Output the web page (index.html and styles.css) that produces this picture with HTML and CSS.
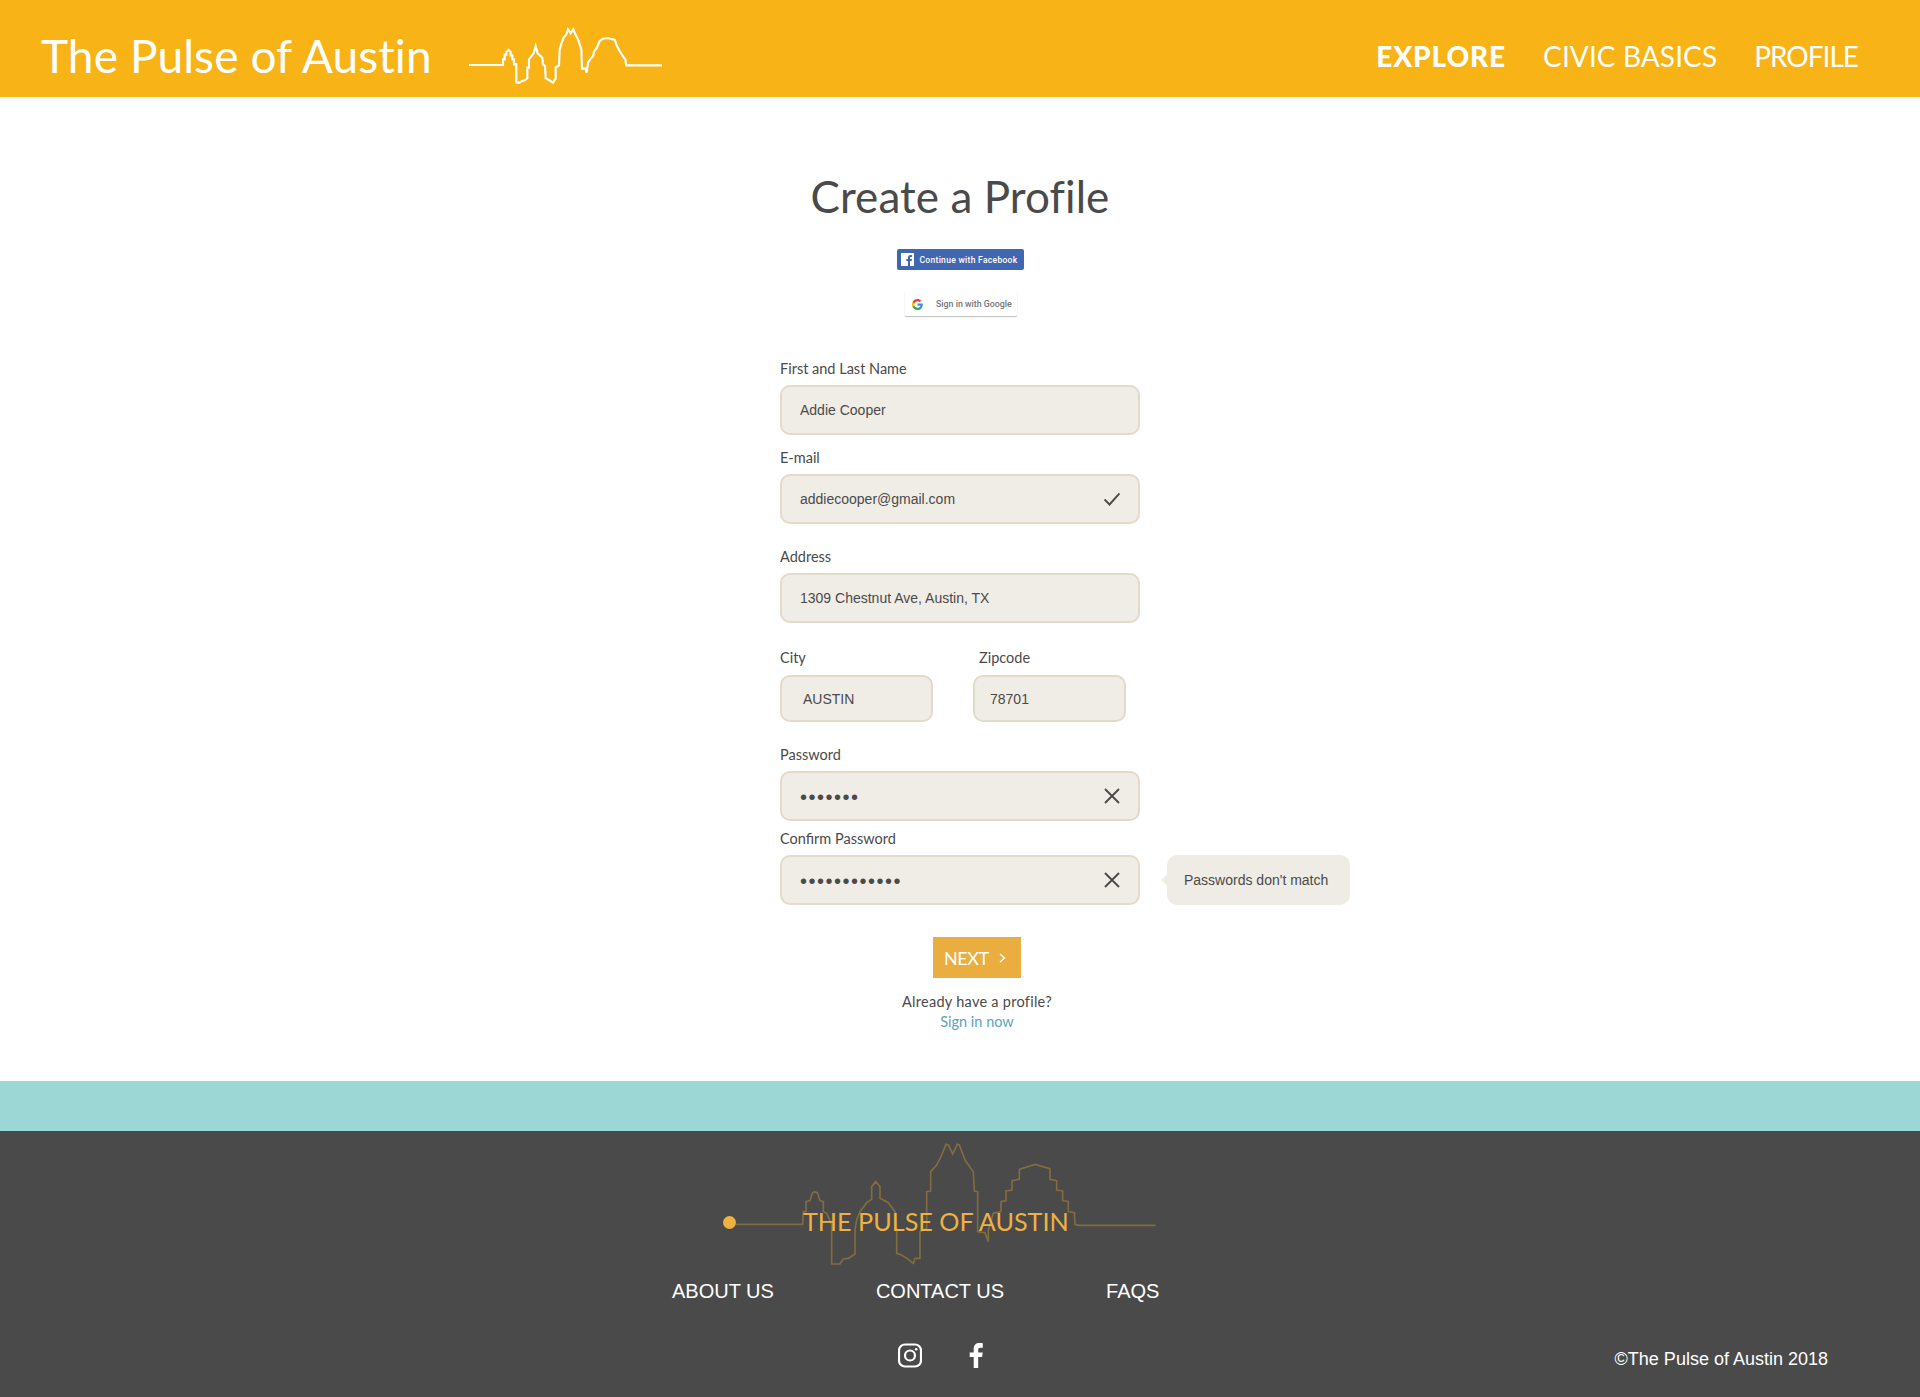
FILE: index.html
```html
<!DOCTYPE html>
<html lang="en">
<head>
<meta charset="utf-8">
<title>The Pulse of Austin</title>
<link rel="stylesheet" href="styles.css">
</head>
<body>
<header class="header">
  <a class="header__title">The Pulse of Austin</a>
  <svg class="header__skyline" viewBox="28 30 580 180" aria-hidden="true">
    <polyline points="28,147 130,147 130,130 135,130 135,116 140,116 140,108 147,102 153,108 153,118 158,118 158,130 163,130 163,145 170,145 170,200 180,200 186,196 195,193 203,187 203,155 208,155 208,130 212,125 222,112 228,90 234,112 240,118 248,125 250,145 256,150 258,187 268,192 280,200 288,188 288,155 298,148 300,100 306,80 312,65 320,55 325,40 333,52 341,40 347,55 355,70 360,85 365,100 367,158 378,158 381,170 385,140 392,130 400,120 404,105 412,95 420,75 430,68 445,66 465,72 472,90 480,105 488,118 497,130 500,148 608,148"/>
  </svg>
  <nav class="nav">
    <a class="nav__link nav__link--active">EXPLORE</a>
    <a class="nav__link">CIVIC BASICS</a>
    <a class="nav__link nav__link--narrow">PROFILE</a>
  </nav>
</header>

<main class="main">
  <h1 class="main__title">Create a Profile</h1>
  <a class="fb-btn">
    <svg class="fb-btn__icon" viewBox="0 0 14 14" aria-hidden="true"><path fill="#fff" d="M0 0h14v14H9.7V8.6h1.8l.3-2.1H9.700V5.200c0-.6.2-1 1-1h1.100V2.300C11.600 2.300 11 2.200 10.200 2.200c-1.600 0-2.700 1-2.700 2.800v1.500H5.700v2.100h1.800V14H0z"/></svg>
    <span>Continue with Facebook</span>
  </a>
  <a class="google-btn">
    <svg class="google-btn__icon" viewBox="0 0 18 18" aria-hidden="true">
      <path fill="#4285F4" d="M17.64 9.2c0-.637-.057-1.251-.164-1.84H9v3.481h4.844c-.209 1.125-.843 2.078-1.796 2.717v2.258h2.908c1.702-1.567 2.684-3.874 2.684-6.615z"/>
      <path fill="#34A853" d="M9 18c2.43 0 4.467-.806 5.956-2.18l-2.908-2.259c-.806.54-1.837.86-3.048.86-2.344 0-4.328-1.584-5.036-3.711H.957v2.332C2.438 15.983 5.482 18 9 18z"/>
      <path fill="#FBBC05" d="M3.964 10.71c-.18-.54-.282-1.117-.282-1.71s.102-1.17.282-1.71V4.958H.957C.347 6.173 0 7.548 0 9s.348 2.827.957 4.042l3.007-2.332z"/>
      <path fill="#EA4335" d="M9 3.58c1.321 0 2.508.454 3.44 1.345l2.582-2.58C13.463.891 11.426 0 9 0 5.482 0 2.438 2.017.957 4.958L3.964 7.29C4.672 5.163 6.656 3.58 9 3.58z"/>
    </svg>
    <span>Sign in with Google</span>
  </a>

  <form class="form">
    <div class="field field--first">
      <label class="field__label">First and Last Name</label>
      <div class="input">Addie Cooper</div>
    </div>
    <div class="field field--email">
      <label class="field__label">E-mail</label>
      <div class="input">addiecooper@gmail.com
        <svg class="input__icon" viewBox="0 0 16 16" aria-hidden="true"><polyline points="0.500,8.500 5.500,13.500 15.500,2.500"/></svg>
      </div>
    </div>
    <div class="field field--address">
      <label class="field__label">Address</label>
      <div class="input">1309 Chestnut Ave, Austin, TX</div>
    </div>
    <div class="field-row">
      <div class="field field--half">
        <label class="field__label">City</label>
        <div class="input input--short input--city">AUSTIN</div>
      </div>
      <div class="field field--half">
        <label class="field__label field__label--zip">Zipcode</label>
        <div class="input input--short input--zip">78701</div>
      </div>
    </div>
    <div class="field field--password">
      <label class="field__label">Password</label>
      <div class="input"><span class="input__dots">•••••••</span>
        <svg class="input__icon" viewBox="0 0 16 16" aria-hidden="true"><path d="M1 1l14 14M15 1L1 15"/></svg>
      </div>
    </div>
    <div class="field field--confirm">
      <label class="field__label">Confirm Password</label>
      <div class="input"><span class="input__dots">••••••••••••</span>
        <svg class="input__icon" viewBox="0 0 16 16" aria-hidden="true"><path d="M1 1l14 14M15 1L1 15"/></svg>
        <div class="tooltip">Passwords don't match</div>
      </div>
    </div>
    <div class="form__actions">
      <a class="next-btn">NEXT
        <svg class="next-btn__chevron" viewBox="0 0 7 10" aria-hidden="true"><polyline points="1,1 5.500,5 1,9"/></svg>
      </a>
      <p class="form__hint">Already have a profile?</p>
      <a class="form__signin">Sign in now</a>
    </div>
  </form>
</main>

<div class="band"></div>

<footer class="footer">
  <div class="footer__brand">
    <svg class="footer__skyline" viewBox="69 30 1300 381" aria-hidden="true">
      <polyline points="108,283 308,283 310,245 318,245 318,215 330,212 337,190 343,185 352,188 360,212 370,215 370,245 380,250 395,283 395,402 420,402 430,387 445,385 465,372 465,300 470,270 480,245 500,218 515,208 515,170 527,155 540,170 540,205 565,218 585,245 590,300 590,370 605,375 625,388 640,400 645,385 660,385 660,305 680,295 680,185 692,183 692,125 710,105 725,75 738,43 745,45 758,72 772,43 778,45 795,90 820,125 823,183 833,185 833,305 855,308 865,335 865,300 880,250 903,245 903,215 918,212 918,183 936,180 936,152 958,148 958,118 1005,103 1050,116 1050,148 1070,152 1070,180 1088,183 1088,212 1105,215 1105,245 1123,248 1125,283 1135,286 1367,286"/>
    </svg>
    <span class="footer__dot"></span>
    <span class="footer__name">THE PULSE OF AUSTIN</span>
  </div>
  <nav class="footer__links">
    <a>ABOUT US</a>
    <a>CONTACT US</a>
    <a>FAQS</a>
  </nav>
  <div class="footer__bottom">
    <svg class="footer__insta" viewBox="0 0 24 24" aria-hidden="true">
      <rect x="1" y="1" width="22" height="22" rx="6"/>
      <circle cx="12" cy="12" r="5"/>
      <circle class="footer__insta-dot" cx="18.200" cy="5.800" r="1.300"/>
    </svg>
    <svg class="footer__fb" viewBox="0 0 14 25" aria-hidden="true"><path d="M9.200 25V14h3.900l.6-4.400H9.200V6.800c0-1.300.4-2.100 2.200-2.100h2.400V.2C13.400.1 12 0 10.400 0 7 0 4.700 2 4.700 5.900v3.700H.7V14h4v11z"/></svg>
    <span class="footer__copy">©The Pulse of Austin 2018</span>
  </div>
</footer>
</body>
</html>
```
FILE: styles.css
```css
* { box-sizing: border-box; }
html, body { margin: 0; padding: 0; }
body {
  background: #fff;
  color: #4a4a4a;
  font-family: "Liberation Sans", Arial, sans-serif;
  width: 1920px;
}

/* Header */
.header {
  height: 97px;
  background: #f8b416;
  color: #fff;
  display: flex;
  align-items: center;
  padding: 14px 62px 0 41px;
  font-family: Lato, sans-serif;
}
.header__title {
  font-size: 46px;
  line-height: 56px;
  letter-spacing: 0.1px;
  width: 388px;
  white-space: nowrap;
}
.header__skyline {
  width: 193.33px;
  height: 60px;
  margin-left: 40px;
  flex: none;
}
.header__skyline polyline {
  fill: none;
  stroke: #fff;
  stroke-width: 6.500;
}
.nav {
  margin-left: auto;
  display: flex;
  gap: 37px;
}
.nav__link {
  font-size: 28px;
  line-height: 36px;
  font-weight: 400;
  letter-spacing: 0.1px;
  white-space: nowrap;
}
.nav__link--active { font-weight: 900; letter-spacing: 0.9px; }
.nav__link--narrow { letter-spacing: -1px; }

/* Main */
.main {
  display: flex;
  flex-direction: column;
  align-items: center;
  padding: 74px 0 49px;
}
.main__title {
  margin: 0;
  font-family: Lato, sans-serif;
  font-weight: 400;
  font-size: 44px;
  line-height: 50px;
  letter-spacing: 0.07px;
  color: #4a4a4a;
}
.fb-btn {
  margin-top: 28px;
  width: 127px;
  height: 21px;
  background: #4267b2;
  border-radius: 2px;
  color: #fff;
  display: flex;
  align-items: center;
  padding-left: 4px;
  gap: 6px;
  font-family: Roboto, sans-serif;
  font-weight: 500;
  font-size: 8.500px;
  letter-spacing: 0.3px;
  white-space: nowrap;
}
.fb-btn__icon { width: 13px; height: 13px; flex: none; }
.google-btn {
  margin: 22px 0 0 2px;
  width: 112px;
  height: 24px;
  background: #fff;
  box-shadow: 0 1px 1px rgba(0, 0, 0, 0.25), 0 0 1px rgba(0, 0, 0, 0.08);
  border-radius: 1px;
  color: #757575;
  display: flex;
  align-items: center;
  padding-left: 7px;
  font-family: Roboto, sans-serif;
  font-weight: 500;
  font-size: 8.800px;
  white-space: nowrap;
}
.google-btn__icon { width: 11px; height: 11px; margin-right: 13px; flex: none; }

/* Form */
.form { width: 360px; }
.field--first { margin-top: 43px; }
.field--email { margin-top: 13px; }
.field--address { margin-top: 23px; }
.field-row { display: flex; gap: 40px; margin-top: 25px; }
.field--half { width: 153px; }
.field--password { margin-top: 23px; }
.field--confirm { margin-top: 8px; }
.field__label {
  display: block;
  font-family: Lato, sans-serif;
  font-size: 14.500px;
  line-height: 19px;
  color: #4a4a4a;
  margin-bottom: 7px;
}
.field__label--zip { padding-left: 6px; }
.field--half .field__label { margin-bottom: 8px; }
.input {
  position: relative;
  height: 50px;
  background: #f0ede6;
  border: 2px solid #e3dac9;
  border-radius: 10px;
  display: flex;
  align-items: center;
  justify-content: space-between;
  padding: 0 18px 0 18px;
  font-size: 14px;
  color: #4a4a4a;
}
.input--short { height: 47px; }
.input--city { padding-left: 21px; }
.input--zip { padding-left: 15px; }
.input__dots {
  font-size: 20px;
  letter-spacing: 1.500px;
  line-height: 1;
  padding-top: 1px;
}
.input__icon {
  width: 16px;
  height: 16px;
  flex: none;
  fill: none;
  stroke: #4a4a4a;
  stroke-width: 1.900;
}
.tooltip {
  position: absolute;
  left: 385px;
  top: -2px;
  width: 183px;
  height: 50px;
  background: #efece5;
  border-radius: 10px;
  display: flex;
  align-items: center;
  padding-left: 17px;
  white-space: nowrap;
}
.tooltip::before {
  content: "";
  position: absolute;
  left: -4px;
  top: 21px;
  width: 8px;
  height: 8px;
  background: #efece5;
  transform: rotate(45deg);
}
.form__actions {
  margin-top: 32px;
  margin-left: 153px;
  width: 88px;
  display: flex;
  flex-direction: column;
  align-items: center;
}
.next-btn {
  width: 88px;
  height: 41px;
  background: #eaad3f;
  color: #fff;
  font-family: Lato, sans-serif;
  font-size: 18px;
  letter-spacing: -0.4px;
  display: flex;
  align-items: center;
  padding-left: 11px;
  gap: 10px;
}
.next-btn__chevron {
  width: 7px;
  height: 10px;
  fill: none;
  stroke: #fff;
  stroke-width: 1.400;
}
.form__hint {
  margin: 14px 0 0;
  font-family: Lato, sans-serif;
  font-size: 14.500px;
  line-height: 20px;
  letter-spacing: 0.27px;
  white-space: nowrap;
}
.form__signin {
  font-family: Lato, sans-serif;
  font-size: 14.500px;
  line-height: 20px;
  color: #5da3ba;
  white-space: nowrap;
}

/* Band and footer */
.band { height: 50px; background: #9dd7d5; }
.footer {
  height: 266px;
  background: #4a4a4a;
  color: #fff;
  padding: 9px 92px 0 672px;
}
.footer__brand {
  position: relative;
  width: 433px;
  height: 127px;
  margin-left: 51px;
}
.footer__skyline {
  display: block;
  width: 433.330px;
  height: 127px;
}
.footer__skyline polyline {
  fill: none;
  stroke: #806c3f;
  stroke-width: 5;
}
.footer__dot {
  position: absolute;
  left: 0;
  top: 76px;
  width: 13px;
  height: 13px;
  border-radius: 50%;
  background: #eeb142;
}
.footer__name {
  position: absolute;
  left: 80px;
  top: 66px;
  font-family: Lato, sans-serif;
  font-size: 25.200px;
  line-height: 30px;
  color: #eeb142;
  white-space: nowrap;
}
.footer__links {
  display: flex;
  gap: 102px;
  margin-top: 12px;
  font-size: 20px;
  line-height: 24px;
}
.footer__bottom {
  display: flex;
  align-items: flex-start;
  margin-top: 40px;
  padding-left: 226px;
}
.footer__insta {
  width: 24px;
  height: 25px;
  fill: none;
  stroke: #fff;
  stroke-width: 2.200;
  flex: none;
}
.footer__insta-dot { fill: #fff; stroke: none; }
.footer__fb {
  width: 14px;
  height: 25px;
  margin-left: 47px;
  fill: #fff;
  flex: none;
}
.footer__copy {
  margin-left: auto;
  margin-top: 5px;
  font-size: 18px;
  line-height: 22px;
  white-space: nowrap;
}
```
